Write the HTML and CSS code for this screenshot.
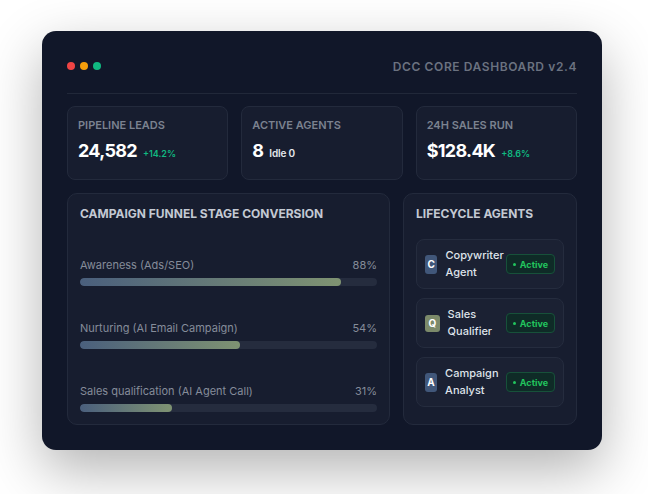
FILE: index.html
```html
<!DOCTYPE html>
<html lang="en">
<head>
    <meta charset="UTF-8">
    <meta name="viewport" content="width=device-width, initial-scale=1.0">
    <title>DCC Core Dashboard</title>
    <link rel="stylesheet" href="styles.css">
</head>
<body>
    <div class="window">
        <div class="top">
            <div class="dots">
                <span class="dot red"></span>
                <span class="dot yellow"></span>
                <span class="dot green"></span>
            </div>
            <div class="app-title">DCC CORE DASHBOARD v2.4</div>
        </div>

        <div class="stats">
            <div class="stat">
                <div class="stat-label">PIPELINE LEADS</div>
                <div class="stat-value">24,582 <span class="delta">+14.2%</span></div>
            </div>
            <div class="stat">
                <div class="stat-label">ACTIVE AGENTS</div>
                <div class="stat-value">8 <span class="idle">Idle 0</span></div>
            </div>
            <div class="stat">
                <div class="stat-label">24H SALES RUN</div>
                <div class="stat-value">$128.4K <span class="delta">+8.6%</span></div>
            </div>
        </div>

        <div class="main">
            <div class="panel funnel">
                <div class="panel-title">CAMPAIGN FUNNEL STAGE CONVERSION</div>
                <div class="rows">
                    <div class="row">
                        <div class="row-head"><span>Awareness (Ads/SEO)</span><span>88%</span></div>
                        <div class="track"><div class="fill" style="width: 88%"></div></div>
                    </div>
                    <div class="row">
                        <div class="row-head"><span>Nurturing (AI Email Campaign)</span><span>54%</span></div>
                        <div class="track"><div class="fill" style="width: 54%"></div></div>
                    </div>
                    <div class="row">
                        <div class="row-head"><span>Sales qualification (AI Agent Call)</span><span>31%</span></div>
                        <div class="track"><div class="fill" style="width: 31%"></div></div>
                    </div>
                </div>
            </div>

            <div class="panel agents">
                <div class="panel-title">LIFECYCLE AGENTS</div>
                <div class="agent-list">
                    <div class="agent">
                        <div class="avatar">C</div>
                        <div class="agent-name">Copywriter Agent</div>
                        <div class="badge"><i></i>Active</div>
                    </div>
                    <div class="agent">
                        <div class="avatar sage">Q</div>
                        <div class="agent-name">Sales Qualifier</div>
                        <div class="badge"><i></i>Active</div>
                    </div>
                    <div class="agent">
                        <div class="avatar">A</div>
                        <div class="agent-name">Campaign Analyst</div>
                        <div class="badge"><i></i>Active</div>
                    </div>
                </div>
            </div>
        </div>
    </div>
</body>
</html>
```

FILE: styles.css
```css
* {
    margin: 0;
    padding: 0;
    box-sizing: border-box;
}

body {
    min-height: 494px;
    padding: 31px 0 40px 42px;
    background: #fff;
    font-family: Inter, "Noto Sans", sans-serif;
}

.window {
    width: 560px;
    padding: 25px;
    background: #111729;
    border-radius: 14px;
    box-shadow: 0 20px 55px rgba(0, 0, 0, 0.3);
}

.top {
    display: flex;
    justify-content: space-between;
    align-items: center;
    height: 38px;
    padding-bottom: 17px;
    border-bottom: 1px solid #212839;
}
.dots {
    display: flex;
    gap: 5px;
}
.dot {
    width: 8px;
    height: 8px;
    border-radius: 50%;
}
.red { background: #ef4444; }
.yellow { background: #f59e0b; }
.green { background: #10b981; }

.app-title {
    color: #6b7280;
    font-size: 12px;
    font-weight: 600;
    letter-spacing: 0.6px;
}

.stats {
    display: grid;
    grid-template-columns: repeat(3, 1fr);
    gap: 13px;
    margin-top: 12px;
}
.stat {
    height: 74px;
    padding: 11px 10px 0;
    background: #171d2f;
    border: 1px solid #232a3c;
    border-radius: 8px;
}
.stat-label {
    color: #7b8290;
    font-size: 11px;
    font-weight: 600;
    line-height: 14px;
}
.stat-value {
    display: flex;
    align-items: baseline;
    gap: 6px;
    margin-top: 7px;
    color: #fff;
    font-size: 18px;
    font-weight: 700;
    line-height: 24px;
    letter-spacing: -0.7px;
}
.delta {
    color: #10b981;
    font-size: 9px;
    font-weight: 600;
    letter-spacing: 0;
}
.idle {
    color: #e5e7eb;
    font-size: 10px;
    font-weight: 600;
    letter-spacing: -0.2px;
}

.main {
    display: grid;
    grid-template-columns: 1fr 174px;
    gap: 13px;
    margin-top: 13px;
}
.panel {
    background: #171d2f;
    border: 1px solid #232a3c;
    border-radius: 10px;
    padding: 13px 12px 12px;
}
.panel-title {
    color: #c3c9d3;
    font-size: 12px;
    font-weight: 700;
    line-height: 14px;
}

.rows {
    display: flex;
    flex-direction: column;
    gap: 35px;
    margin-top: 37px;
}
.row-head {
    display: flex;
    justify-content: space-between;
    color: #858c9a;
    font-size: 11px;
    line-height: 14px;
}
.track {
    height: 8px;
    margin-top: 6px;
    background: #252c3e;
    border-radius: 4px;
    overflow: hidden;
}
.fill {
    height: 100%;
    border-radius: 4px;
    background: linear-gradient(90deg, #4a5f7d, #7f9372);
}

.agent-list {
    display: flex;
    flex-direction: column;
    gap: 9px;
    margin-top: 18px;
}
.agent {
    display: flex;
    align-items: center;
    gap: 8px;
    height: 50px;
    padding: 0 8px;
    background: #1b2133;
    border: 1px solid #252c3e;
    border-radius: 8px;
}
.avatar {
    flex: 0 1 22px;
    height: 19px;
    display: flex;
    align-items: center;
    justify-content: center;
    background: #41577a;
    color: #fff;
    font-size: 10px;
    font-weight: 700;
    border-radius: 3px;
}
.avatar.sage {
    background: #7c8a6a;
    height: 17px;
}
.agent-name {
    flex: 0 1 auto;
    min-width: 0;
    color: #dfe3ea;
    font-size: 11px;
    font-weight: 500;
    line-height: 17px;
}
.badge {
    flex-shrink: 0;
    display: flex;
    align-items: center;
    gap: 4px;
    margin-left: auto;
    height: 20px;
    padding: 0 6px;
    background: #0f2b27;
    border: 1px solid #17513a;
    border-radius: 4px;
    color: #22c55e;
    font-size: 9px;
    font-weight: 700;
}
.badge i {
    width: 3px;
    height: 3px;
    border-radius: 50%;
    background: #22c55e;
}
```
